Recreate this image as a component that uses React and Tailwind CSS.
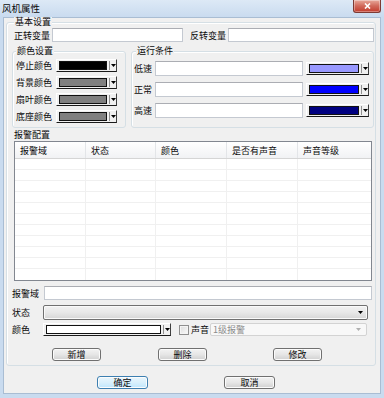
import React from "react";

const font = { fontFamily: '"Noto Sans CJK SC", "Noto Sans", sans-serif' };

function Arrow({ cls = "fill-black" }) {
  return (
    <svg width="5" height="3" viewBox="0 0 5 3" className={cls}>
      <path d="M0 0H5L2.5 3Z" />
    </svg>
  );
}

function ColorCombo({ w, fill }) {
  return (
    <div className={`flex h-[13px] items-stretch border border-t-white border-l-white border-r-[#404040] border-b-[#1a1a1a] bg-[#f0f0f0] ${w}`}>
      <div className={`my-[1px] ml-[2px] flex-1 border border-[#111] ${fill}`} />
      <div className="ml-[2px] my-[1px] w-px bg-[#909090]" />
      <div className="flex w-[6px] items-center justify-center">
        <Arrow />
      </div>
    </div>
  );
}

function Input({ w, h = "h-[14px]" }) {
  return <div className={`${w} ${h} border border-[#c4c9d1] border-t-[#abadb3] bg-white`} />;
}

function Btn({ label, w, def }) {
  return (
    <div
      className={`flex h-[13px] items-center justify-center rounded-[3px] border text-[9px] leading-none ${w} ${
        def
          ? "border-[#3c7fb1] bg-gradient-to-b from-[#eaf6fd] via-[#d9f0fc] to-[#bee6fd] shadow-[inset_0_0_0_1px_#fcfcfc]"
          : "border-[#707070] bg-gradient-to-b from-[#f3f3f3] via-[#e6e6e6] to-[#d0d0d0] shadow-[inset_0_0_0_1px_#fbfbfb]"
      }`}
    >
      {label}
    </div>
  );
}

function Group({ label, cls, children, labelCls = "left-[4px]" }) {
  return (
    <div className={`relative rounded-[3px] border border-[#d5dfe5] shadow-[inset_1px_1px_0_#ffffff] ${cls}`}>
      <div className={`absolute -top-[6px] bg-[#f0f0f0] px-[1px] text-[9px] leading-[10px] ${labelCls}`}>{label}</div>
      {children}
    </div>
  );
}

const cols = [
  ["报警域", "w-[71px]"],
  ["状态", "w-[70px]"],
  ["颜色", "w-[71px]"],
  ["是否有声音", "w-[71px]"],
  ["声音等级", "w-[73px]"],
];

export default function App() {
  const rows = Array.from({ length: 11 }, (_, i) => i);
  return (
    <div
      className="flex h-[398px] w-[384px] flex-col overflow-hidden bg-[#c9dbef] text-[#0a0a0a]"
      style={font}
    >
      {/* title bar */}
      <div className="flex h-[17px] items-start bg-gradient-to-b from-[#dde9f6] to-[#c9dbef]">
        <div className="mt-[2px] ml-[2px] text-[9.5px] leading-[12px]">风机属性</div>
        <div className="ml-auto mr-[3px] flex h-[13px] w-[28px] items-center justify-center rounded-b-[3px] border border-t-0 border-[#7d3a33] bg-gradient-to-b from-[#e7a99c] via-[#d0685a] to-[#c2392a] shadow-[inset_0_0_0_1px_rgba(255,255,255,0.35)]">
          <svg width="7" height="6" viewBox="0 0 7 6">
            <path d="M1 0.5L6 5.5M6 0.5L1 5.5" stroke="#fff" strokeWidth="1.6" />
          </svg>
        </div>
      </div>

      {/* body */}
      <div className="mx-[3px] mb-[4px] flex flex-1 flex-col border border-[#a9bdd3] bg-[#f0f0f0]">
        <Group label="基本设置" cls="ml-[2px] mt-[4px] h-[344px] w-[370px]" labelCls="left-[7px]">
          {/* row 1 */}
          <div className="mt-[5px] flex h-[14px] items-center pl-[7px] text-[9px] leading-none">
            <div className="w-[38px] whitespace-nowrap">正转变量</div>
            <Input w="w-[131px]" />
            <div className="ml-[7px] w-[38px] whitespace-nowrap">反转变量</div>
            <Input w="w-[146px]" />
          </div>

          {/* row 2 groups */}
          <div className="mt-[9px] flex">
            <Group label="颜色设置" cls="ml-[5px] h-[77px] w-[114px]" labelCls="left-[3px]">
              <div className="mt-[7px] flex flex-col gap-[4px] pl-[3px] text-[9px] leading-none">
                {[
                  ["停止颜色", "bg-black"],
                  ["背景颜色", "bg-[#808080]"],
                  ["扇叶颜色", "bg-[#808080]"],
                  ["底座颜色", "bg-[#808080]"],
                ].map(([l, c]) => (
                  <div key={l} className="flex h-[13px] items-center">
                    <div className="w-[40px]">{l}</div>
                    <ColorCombo w="w-[61px]" fill={c} />
                  </div>
                ))}
              </div>
            </Group>
            <Group label="运行条件" cls="ml-[5px] h-[77px] w-[243px]" labelCls="left-[4px]">
              <div className="mt-[9px] flex flex-col gap-[6px] pl-[2px] text-[9px] leading-none">
                {[
                  ["低速", "bg-[#9999ff]"],
                  ["正常", "bg-[#0000ff]"],
                  ["高速", "bg-[#000080]"],
                ].map(([l, c]) => (
                  <div key={l} className="flex h-[15px] items-center">
                    <div className="w-[21px]">{l}</div>
                    <Input w="w-[148px]" h="h-[15px]" />
                    <div className="ml-[3px]">
                      <ColorCombo w="w-[63px]" fill={c} />
                    </div>
                  </div>
                ))}
              </div>
            </Group>
          </div>

          {/* alarm label */}
          <div className="mt-[1px] h-[12px] pl-[7px] text-[9px] leading-[12px]">报警配置</div>

          {/* table */}
          <div className="ml-[7px] w-[358px] border border-[#828790] bg-white text-[9px] leading-none">
            <div className="flex h-[17px] border-b border-[#d5d5d5] bg-gradient-to-b from-white to-[#f1f2f4]">
              {cols.map(([t, w], i) => (
                <div
                  key={t}
                  className={`flex items-center pl-[5px] ${w} ${i < 4 ? "border-r border-[#e3e5e8]" : ""}`}
                >
                  {t}
                </div>
              ))}
            </div>
            {rows.map((r) => (
              <div key={r} className={`flex h-[11px] ${r < 10 ? "border-b border-[#f0f0f0]" : ""}`}>
                {cols.map(([t, w], i) => (
                  <div key={t} className={`${w} ${i < 4 ? "border-r border-[#f0f0f0]" : ""}`} />
                ))}
              </div>
            ))}
          </div>

          {/* form rows */}
          <div className="mt-[5px] flex h-[14px] items-center pl-[5px] text-[9px] leading-none">
            <div className="w-[32px]">报警域</div>
            <Input w="w-[328px]" />
          </div>
          <div className="mt-[5px] flex h-[15px] items-center pl-[5px] text-[9px] leading-none">
            <div className="w-[31px]">状态</div>
            <div className="flex h-[15px] w-[325px] items-center justify-end rounded-[2px] border border-[#707070] bg-gradient-to-b from-[#f2f2f2] via-[#e8e8e8] to-[#d6d6d6] pr-[4px] shadow-[inset_0_0_0_1px_#fafafa]">
              <Arrow />
            </div>
          </div>
          <div className="mt-[3px] flex h-[13px] items-center pl-[5px] text-[9px] leading-none">
            <div className="w-[31px]">颜色</div>
            <ColorCombo w="w-[128px]" fill="bg-white" />
            <div className="ml-[8px] h-[10px] w-[10px] border border-[#8f8f8f] bg-gradient-to-br from-[#dcdcdc] to-[#fbfbfb] shadow-[inset_0_0_0_1px_#f4f4f4]" />
            <div className="ml-[2px] w-[19px]">声音</div>
            <div className="flex h-[13px] w-[157px] items-center justify-between rounded-[2px] border border-[#d3d3d3] bg-[#f8f8f8] pl-[2px] pr-[5px] text-[#8c8c8c]">
              <span>1级报警</span>
              <Arrow cls="fill-[#b0b0b0]" />
            </div>
          </div>

          <div className="mt-[12px] flex h-[13px] items-center">
            <div className="ml-[45px]">
              <Btn label="新增" w="w-[49px]" />
            </div>
            <div className="ml-[57px]">
              <Btn label="删除" w="w-[49px]" />
            </div>
            <div className="ml-[66px]">
              <Btn label="修改" w="w-[49px]" />
            </div>
          </div>
        </Group>

        <div className="mt-[10px] flex">
          <div className="ml-[93px]">
            <Btn label="确定" w="w-[51px]" def />
          </div>
          <div className="ml-[76px]">
            <Btn label="取消" w="w-[51px]" />
          </div>
        </div>
      </div>
    </div>
  );
}
